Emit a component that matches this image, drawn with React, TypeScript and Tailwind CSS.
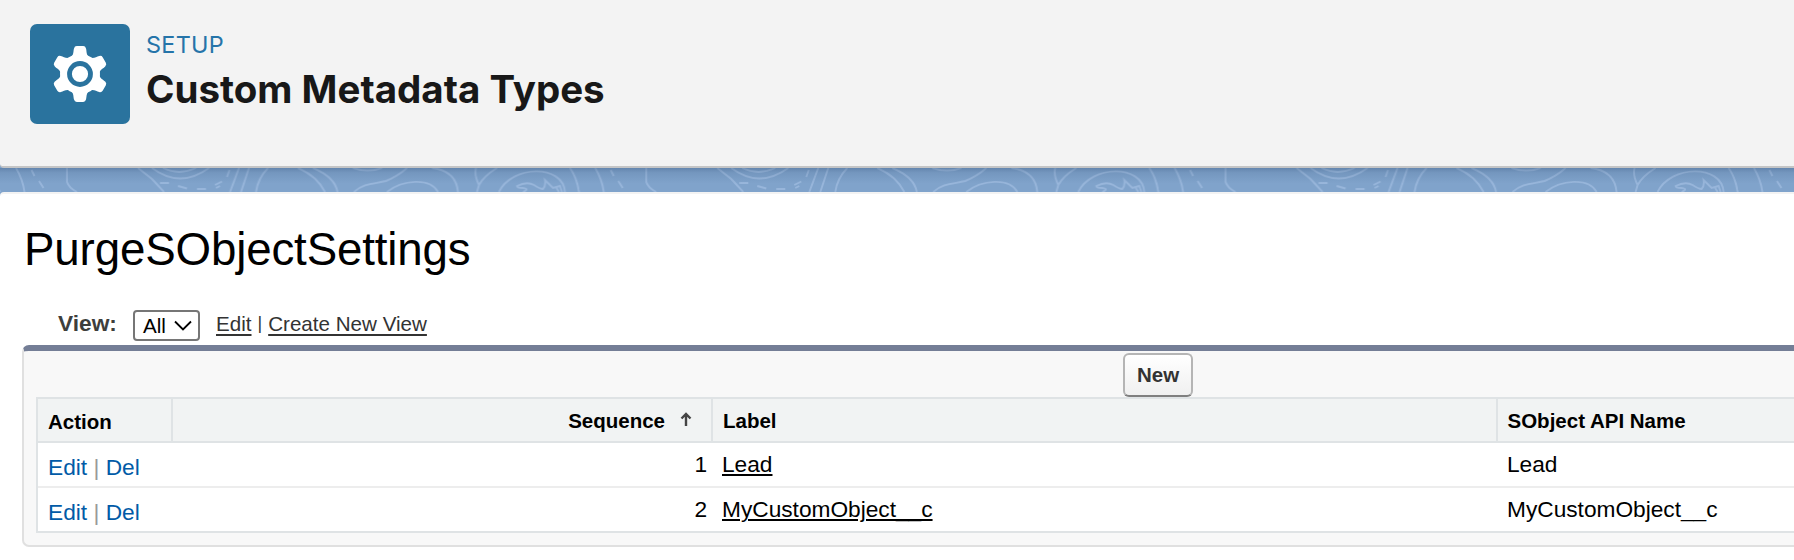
import React from "react";

const rows = [
  { seq: 1, label: "Lead", api: "Lead" },
  { seq: 2, label: "MyCustomObject__c", api: "MyCustomObject__c" },
];

const TOOTH =
  "M-9 -17 C-6 -19.5 -6.8 -23 -6 -25.6 Q-5.4 -28 -3.2 -28 H3.2 Q5.4 -28 6 -25.6 C6.8 -23 6 -19.5 9 -17 Z";

function Gear() {
  return (
    <svg className="size-[60px]" viewBox="-30 -30 60 60">
      <g fill="#fff">
        {[0, 60, 120, 180, 240, 300].map((a) => (
          <path key={a} d={TOOTH} transform={`rotate(${a})`} />
        ))}
        <circle r="20" />
      </g>
      <circle r="10.5" fill="none" stroke="#2a739e" strokeWidth="4.8" />
    </svg>
  );
}

function Waves() {
  return (
    <svg className="block h-6 w-full" aria-hidden="true">
      <defs>
        <linearGradient id="shade" x1="0" y1="0" x2="0" y2="1">
          <stop offset="0" stopColor="#0b2a50" stopOpacity="0.24" />
          <stop offset="0.2" stopColor="#0b2a50" stopOpacity="0.1" />
          <stop offset="0.65" stopColor="#0b2a50" stopOpacity="0" />
        </linearGradient>
        <pattern id="topo" width="579.3" height="24" patternUnits="userSpaceOnUse">
          <g fill="none" stroke="#9dbade" strokeWidth="1.9" strokeOpacity="0.8">
            <path d="M-9 0 L0 24 M570 0 Q577 10 579 24" />
            <path d="M16 0 Q23 12 24.500 24 M31.500 2 L34.500 8 M39 13 L43.500 20" />
            <path d="M67 0 V14 Q69 20 77 24" />
            <path d="M138 0 L152 11 L164 24 M152 0 Q180 21 209 0 M163 0 Q179 8 196 0" />
            <path d="M160 15 H169 M178 18 L187 20.500 M197 21 H206 M215 17 L222 13.500 M216 20 L220 18 M229.500 2 L227 9" />
            <path d="M239 0 L230 24 M249 0 L241 24 M268 0 Q258 10 256 24" />
            <path d="M298 0 Q317 8 325 24 M313 0 Q335 9 337.500 24" />
            <path d="M353 0 Q368 5 382 0" />
            <path d="M407 0 Q398 8 386 13 C374 16 364 15 354 24" />
            <path d="M432 0 C450 2 457 12 458 24" />
            <path d="M387 24 C402 12 430 9 438 24" />
            <path d="M476 0 Q474 7 479 17 L477 24 M497 0 Q484 8 479 17" />
            <path d="M499 24 C512 -3 563 -4 565 24" />
            <path d="M523 24 Q530 21 523 20 Q517 20 517 18 Q527 13 534 17 Q540 21 543 21 Q546 18 545 12 L553 20 L560 18 L562 24 M556 19 L559 24" />
          </g>
        </pattern>
      </defs>
      <rect width="100%" height="24" fill="#80a3cb" />
      <rect width="100%" height="24" fill="url(#topo)" />
      <rect width="100%" height="24" fill="url(#shade)" />
    </svg>
  );
}

function SortArrow() {
  return (
    <svg className="ml-[15px] h-[18px] w-3" viewBox="0 0 12 18" fill="none" stroke="#444" strokeWidth="2.4">
      <path d="M6 15V3.500M1.500 7.500 6 3l4.500 4.500" />
    </svg>
  );
}

const GRID = "grid grid-cols-[135px_540px_785px_1fr]";

export default function App() {
  return (
    <div className="h-[560px] w-full overflow-hidden bg-[#80a3cb] font-['Liberation_Sans',Arial,sans-serif] text-black">
      <header className="flex h-[168px] gap-[16px] rounded-bl-[4px] border-b-2 border-[#c4c5c6] bg-[#f3f3f3] pl-[30px] pt-6 font-[Inter,sans-serif]">
        <div className="flex size-[100px] items-center justify-center rounded-[7px] bg-[#2a739e]">
          <Gear />
        </div>
        <div>
          <div className="mt-[6px] h-[30px] text-[23.4px] leading-[30px] tracking-[0.3px] text-[#2574a9]">SETUP</div>
          <h1 className="mt-[6px] text-[38.5px] font-bold leading-[46px] text-[#181818]">
            Custom Metadata Types
          </h1>
        </div>
      </header>
      <Waves />
      <main className="h-[368px] rounded-tl-[4px] border-t-2 border-[#f3f3f3] bg-white pl-[22px]">
        <h2 className="ml-[2px] h-[85px] pt-[26px] text-[45.7px] leading-[60px] tracking-[-0.15px]">PurgeSObjectSettings</h2>
        <div className="flex h-[66px] items-end pb-[4px] pl-9 text-[20.6px] text-[#333]">
          <span className="mb-[3px] w-[75px] text-[22.7px] font-bold leading-[30px] text-[#3e3e3c]">View:</span>
          <button className="flex h-[31px] w-[67px] items-center rounded-[4px] border-2 border-[#767676] bg-white pl-2 text-black">
            <span className="pt-[1px] leading-[26px]">All</span>
            <svg className="ml-[8px] h-3 w-[18px]" viewBox="0 0 18 12" fill="none" stroke="#000" strokeWidth="1.8">
              <path d="M1 1.500 9 9.500 17 1.500" />
            </svg>
          </button>
          <div className="mb-[2px] ml-4 flex leading-[30px]">
            <a className="underline decoration-2 underline-offset-[3px]">Edit</a>
            <span className="mx-[6px] -mt-[1px] text-[18px]">|</span>
            <a className="underline decoration-2 underline-offset-[3px]">Create New View</a>
          </div>
        </div>
        <section className="h-[202px] overflow-hidden rounded-l-[7px] border-b-2 border-l-2 border-t-[6px] border-b-[#e0e0e0] border-l-[#e0e0e0] border-t-[#747e96] bg-[#f8f8f8] pl-3">
          <div className="flex h-[46px] pl-[1087px] pt-[2px]">
            <button className="h-11 w-[70px] rounded-[6px] border-2 border-[#b5b5b5] border-b-[#7f7f7f] bg-linear-to-b from-white to-[#f0f0f0] text-[20.5px] font-bold text-[#333]">
              New
            </button>
          </div>
          <div className="border-2 border-r-0 border-[#dfe3e5] bg-white">
            <div className={`${GRID} h-11 grid-rows-[42px] border-b-2 border-[#dfe3e5] bg-[#f1f3f3] text-[20.5px] font-bold leading-[42px]`}>
              <div className="border-r-2 border-[#dfe3e5] pl-[10px] pt-[2px]">Action</div>
              <div className="flex items-center justify-end border-r-2 border-[#dfe3e5] pr-[19px]">
                <span className="pt-[1px]">Sequence</span>
                <SortArrow />
              </div>
              <div className="border-r-2 border-[#dfe3e5] pl-[10px] pt-[1px]">Label</div>
              <div className="pl-[9.500px] pt-[1px]">SObject API Name</div>
            </div>
            {rows.map((r, i) => (
              <div
                key={r.seq}
                className={`${GRID} text-[22.7px] leading-[43px] ${i === 0 ? "h-[45px] border-b-2 border-[#ededed]" : "h-[43px]"}`}
              >
                <div className="pl-[10px] pt-[2.500px] text-[#015ba7]">
                  <a>Edit</a>
                  <span className="text-[#999]"> | </span>
                  <a>Del</a>
                </div>
                <div className="pr-[6px] text-right">{r.seq}</div>
                <div className="pl-[9px]">
                  <a className="underline decoration-2 underline-offset-[2px]">{r.label}</a>
                </div>
                <div className="pl-[9px]">{r.api}</div>
              </div>
            ))}
          </div>
        </section>
      </main>
    </div>
  );
}
